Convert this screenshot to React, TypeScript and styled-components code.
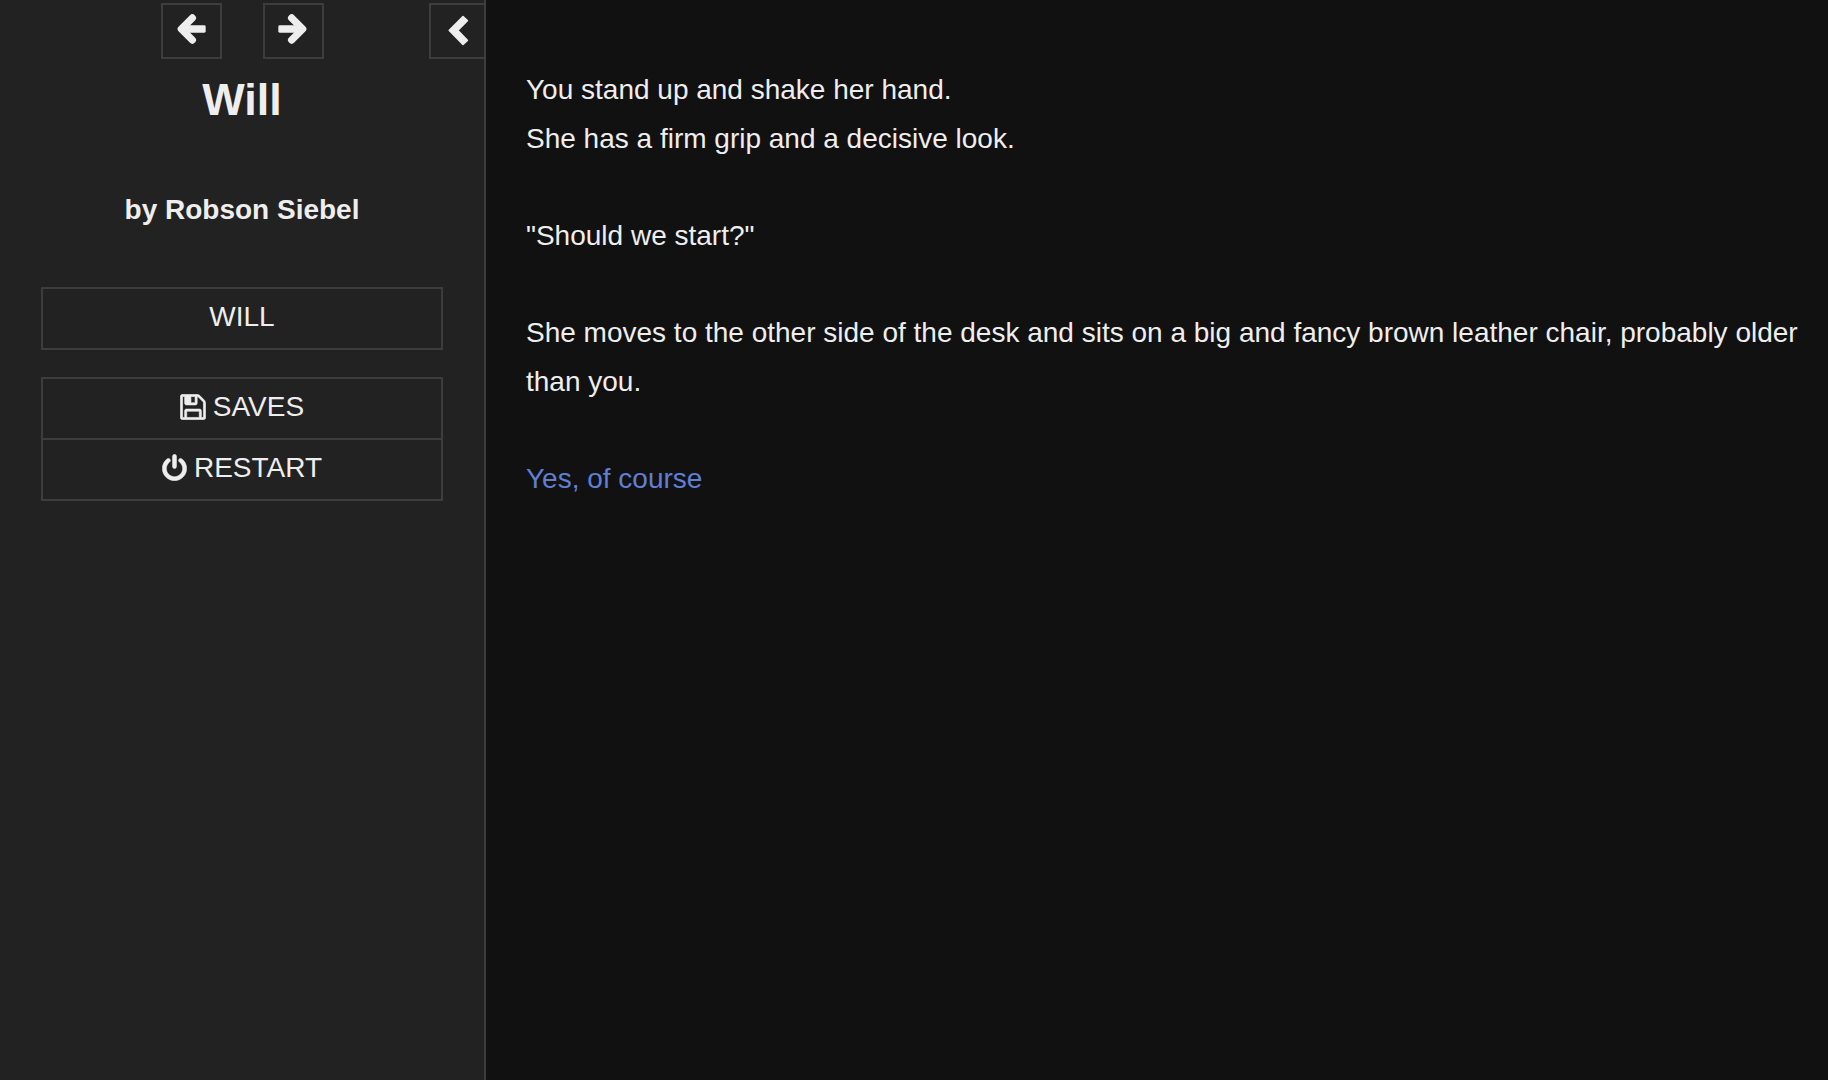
import React from "react";
import styled, { createGlobalStyle } from "styled-components";

const GlobalStyle = createGlobalStyle`
  *, *::before, *::after { box-sizing: border-box; }
  body {
    margin: 0;
    background: #111;
    color: #eee;
    font-family: "Liberation Sans", Arial, sans-serif;
    font-size: 28px;
  }
`;

const Layout = styled.div`
  display: grid;
  grid-template-columns: 486px minmax(0, 1fr);
  min-height: 100vh;
`;

const Sidebar = styled.aside`
  background: #222;
  border-right: 2px solid #3d3d3d;
  padding-top: 3px;
  text-align: center;
`;

const Tray = styled.div`
  display: grid;
  grid-template-columns: 1fr auto 1fr;
`;

const History = styled.div`
  display: flex;
  grid-column: 2;
  gap: 41px;
`;

const TrayButton = styled.button<{ $edge?: boolean }>`
  display: flex;
  align-items: center;
  justify-content: center;
  width: ${(p) => (p.$edge ? 55 : 61)}px;
  height: 56px;
  padding: ${(p) => (p.$edge ? "0 0 2px 2px" : "0 0 4px")};
  justify-self: end;
  background: transparent;
  border: 2px solid #3d3d3d;
  border-right-width: ${(p) => (p.$edge ? 0 : 2)}px;
  color: #eee;
  cursor: pointer;
`;

const Title = styled.h1`
  margin: 13px 0 0;
  font-size: 45px;
  line-height: 56px;
`;

const Byline = styled.p`
  margin: 58px 0 0;
  font-weight: bold;
  line-height: 48px;
`;

const Menus = styled.nav`
  display: flex;
  flex-direction: column;
  gap: 27px;
  margin: 53px 41px 0;
`;

const Menu = styled.ul`
  list-style: none;
  margin: 0;
  padding: 0;
  border: 2px solid #3d3d3d;
`;

const MenuItem = styled.li`
  & + & { border-top: 2px solid #3d3d3d; }
`;

const MenuButton = styled.button`
  display: flex;
  align-items: center;
  justify-content: center;
  gap: 7px;
  width: 100%;
  height: 59px;
  padding: 0 0 4px;
  background: transparent;
  border: 0;
  color: #eee;
  font: inherit;
  text-transform: uppercase;
  cursor: pointer;
`;

const Story = styled.main`
  padding: 65px 28px 40px 40px;
  line-height: 49px;
`;

const Passage = styled.p`
  margin: 0 0 48px;
`;

const Choice = styled.a`
  color: #5f7fd4;
  text-decoration: none;
`;

const savePath =
  "M512 1536h768v-384h-768v384zm896 0h128v-896q0-14-10-38.5t-20-34.5l-281-281q-10-10-34-20t-39-10v416q0 40-28 68t-68 28h-576q-40 0-68-28t-28-68v-416h-128v1280h128v-416q0-40 28-68t68-28h832q40 0 68 28t28 68v416zm-384-928v-320q0-13-9.5-22.5t-22.5-9.5h-192q-13 0-22.5 9.5t-9.5 22.5v320q0 13 9.5 22.5t22.5 9.5h192q13 0 22.5-9.5t9.5-22.5zm640 32v928q0 40-28 68t-68 28h-1344q-40 0-68-28t-28-68v-1344q0-40 28-68t68-28h928q40 0 88 20t76 48l280 280q28 28 48 76t20 88z";
const powerPath =
  "M1664 896q0 156-61 298t-164 245-245 164-298 61-298-61-245-164-164-245-61-298q0-182 80.5-343t226.5-270q43-32 95.5-25t83.5 50q32 42 24.5 94.5t-49.5 84.5q-98 74-151.5 181t-53.5 228q0 104 40.5 198.5t109.5 163.5 163.5 109.5 198.5 40.5 198.5-40.5 163.5-109.5 109.5-163.5 40.5-198.5q0-121-53.5-228t-151.5-181q-42-32-49.5-84.5t24.5-94.5q31-43 84-50t95 25q146 109 226.5 270t80.5 343zm-640-768v640q0 52-38 90t-90 38-90-38-38-90v-640q0-52 38-90t90-38 90 38 38 90z";

function ArrowIcon({ flip }: { flip?: boolean }) {
  return (
    <svg width={30} height={30} viewBox="0 0 90 90" fill="currentColor" aria-hidden="true">
      <g transform={flip ? "translate(90 0) scale(-1 1)" : undefined}>
        <path d="M49 12L16 45L49 78" fill="none" stroke="currentColor" strokeWidth={22} strokeLinejoin="round" strokeLinecap="round" />
        <path d="M14 34H85Q89 34 89 38V52Q89 56 85 56H14Z" />
      </g>
    </svg>
  );
}

function ChevronIcon() {
  return (
    <svg width={21} height={31} viewBox="0 0 63 93" aria-hidden="true">
      <path
        d="M4 46L45 5L58 17L29 46L58 76L45 88Z"
        fill="currentColor"
        stroke="currentColor"
        strokeWidth={5}
        strokeLinejoin="round"
      />
    </svg>
  );
}

function SaveIcon() {
  return (
    <svg width={26} height={26} viewBox="98 98 1596 1596" fill="currentColor" stroke="currentColor" strokeWidth={40} aria-hidden="true">
      <path d={savePath} />
    </svg>
  );
}

function PowerIcon() {
  return (
    <svg width={25} height={27} viewBox="108 -20 1576 1704" fill="currentColor" stroke="currentColor" strokeWidth={30} aria-hidden="true">
      <path d={powerPath} />
    </svg>
  );
}

export default function App() {
  return (
    <>
      <GlobalStyle />
      <Layout>
        <Sidebar>
          <Tray>
            <History>
              <TrayButton aria-label="Go backward"><ArrowIcon /></TrayButton>
              <TrayButton aria-label="Go forward"><ArrowIcon flip /></TrayButton>
            </History>
            <TrayButton $edge aria-label="Toggle the sidebar"><ChevronIcon /></TrayButton>
          </Tray>
          <Title>Will</Title>
          <Byline>by Robson Siebel</Byline>
          <Menus>
            <Menu>
              <MenuItem><MenuButton>Will</MenuButton></MenuItem>
            </Menu>
            <Menu>
              <MenuItem><MenuButton><SaveIcon />Saves</MenuButton></MenuItem>
              <MenuItem><MenuButton><PowerIcon />Restart</MenuButton></MenuItem>
            </Menu>
          </Menus>
        </Sidebar>
        <Story>
          <Passage>
            You stand up and shake her hand.
            <br />
            She has a firm grip and a decisive look.
          </Passage>
          <Passage>"Should we start?"</Passage>
          <Passage>
            She moves to the other side of the desk and sits on a big and fancy brown leather chair, probably older than you.
          </Passage>
          <Choice href="#next">Yes, of course</Choice>
        </Story>
      </Layout>
    </>
  );
}
